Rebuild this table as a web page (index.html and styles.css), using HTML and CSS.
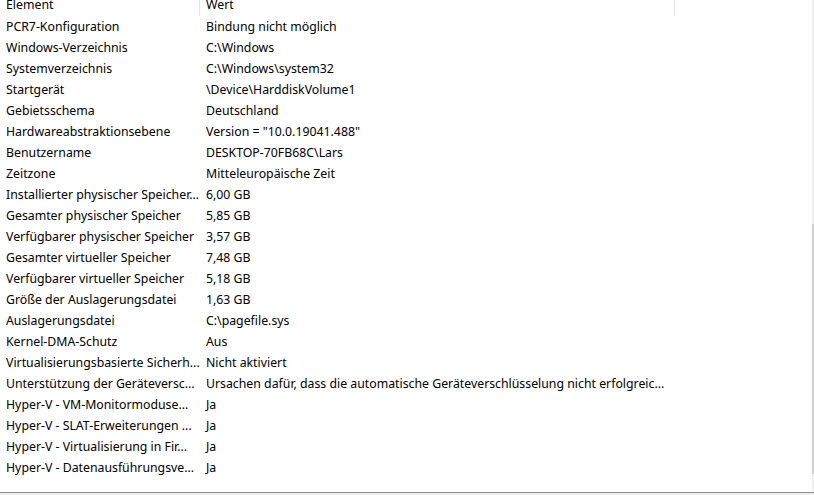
FILE: index.html
```html
<!DOCTYPE html>
<html lang="de">
<head>
<meta charset="utf-8">
<title>Systeminformationen</title>
<link rel="stylesheet" href="styles.css">
</head>
<body>
<div class="frame">
  <div class="main">
    <div class="list">
      <div class="header">
        <div class="hcell c1">Element</div>
        <div class="hcell c2">Wert</div>
        <div class="hcell c3"></div>
      </div>
      <div class="row"><div class="cell c1">PCR7-Konfiguration</div><div class="cell c2">Bindung nicht möglich</div></div>
      <div class="row"><div class="cell c1">Windows-Verzeichnis</div><div class="cell c2">C:\Windows</div></div>
      <div class="row"><div class="cell c1">Systemverzeichnis</div><div class="cell c2">C:\Windows\system32</div></div>
      <div class="row"><div class="cell c1">Startgerät</div><div class="cell c2">\Device\HarddiskVolume1</div></div>
      <div class="row"><div class="cell c1">Gebietsschema</div><div class="cell c2">Deutschland</div></div>
      <div class="row"><div class="cell c1">Hardwareabstraktionsebene</div><div class="cell c2">Version = "10.0.19041.488"</div></div>
      <div class="row"><div class="cell c1">Benutzername</div><div class="cell c2">DESKTOP-70FB68C\Lars</div></div>
      <div class="row"><div class="cell c1">Zeitzone</div><div class="cell c2">Mitteleuropäische Zeit</div></div>
      <div class="row"><div class="cell c1">Installierter physischer Speicher...</div><div class="cell c2">6,00 GB</div></div>
      <div class="row"><div class="cell c1">Gesamter physischer Speicher</div><div class="cell c2">5,85 GB</div></div>
      <div class="row"><div class="cell c1">Verfügbarer physischer Speicher</div><div class="cell c2">3,57 GB</div></div>
      <div class="row"><div class="cell c1">Gesamter virtueller Speicher</div><div class="cell c2">7,48 GB</div></div>
      <div class="row"><div class="cell c1">Verfügbarer virtueller Speicher</div><div class="cell c2">5,18 GB</div></div>
      <div class="row"><div class="cell c1">Größe der Auslagerungsdatei</div><div class="cell c2">1,63 GB</div></div>
      <div class="row"><div class="cell c1">Auslagerungsdatei</div><div class="cell c2">C:\pagefile.sys</div></div>
      <div class="row"><div class="cell c1">Kernel-DMA-Schutz</div><div class="cell c2">Aus</div></div>
      <div class="row"><div class="cell c1">Virtualisierungsbasierte Sicherh...</div><div class="cell c2">Nicht aktiviert</div></div>
      <div class="row"><div class="cell c1">Unterstützung der Geräteversc...</div><div class="cell c2">Ursachen dafür, dass die automatische Geräteverschlüsselung nicht erfolgreic...</div></div>
      <div class="row"><div class="cell c1">Hyper-V - VM-Monitormoduse...</div><div class="cell c2">Ja</div></div>
      <div class="row"><div class="cell c1">Hyper-V - SLAT-Erweiterungen ...</div><div class="cell c2">Ja</div></div>
      <div class="row"><div class="cell c1">Hyper-V - Virtualisierung in Fir...</div><div class="cell c2">Ja</div></div>
      <div class="row"><div class="cell c1">Hyper-V - Datenausführungsve...</div><div class="cell c2">Ja</div></div>
    </div>
    <div class="scrollbar">
      <div class="track-top"></div>
      <div class="thumb"></div>
      <div class="track-bottom"></div>
    </div>
  </div>
  <div class="bottom-line"></div>
  <div class="bottom-pad"></div>
</div>
</body>
</html>
```

FILE: styles.css
```css
html, body {
  margin: 0;
  padding: 0;
  background: #ffffff;
}

body {
  width: 814px;
  height: 495px;
  overflow: hidden;
  font-family: "Segoe UI", "Noto Sans", "Liberation Sans", sans-serif;
  font-size: 12.3px;
  color: #000000;
}

.frame {
  display: flex;
  flex-direction: column;
  height: 495px;
}

.main {
  display: flex;
  flex: 1;
  min-height: 0;
}

.list {
  flex: 1;
  display: flex;
  flex-direction: column;
}

.header {
  display: flex;
  height: 16px;
  overflow: hidden;
  align-items: flex-end;
}

.hcell {
  line-height: 21px;
  height: 22px;
  padding-left: 6px;
  box-sizing: border-box;
  white-space: nowrap;
  overflow: hidden;
}

.hcell.c1,
.hcell.c2 {
  border-right: 1px solid #e5e5e5;
}

.row {
  display: flex;
  height: 21px;
  line-height: 21px;
}

.c1 {
  width: 200px;
  flex: 0 0 200px;
  box-sizing: border-box;
  padding-left: 6px;
  white-space: nowrap;
  overflow: hidden;
}

.c2 {
  width: 475px;
  flex: 0 0 475px;
  box-sizing: border-box;
  padding-left: 6px;
  white-space: nowrap;
  overflow: hidden;
}

.c3 {
  flex: 1;
}

.scrollbar {
  width: 2px;
  display: flex;
  flex-direction: column;
}

.track-top {
  height: 224px;
  background: #f0f0f0;
}

.thumb {
  height: 250px;
  background: #cdcdcd;
}

.track-bottom {
  flex: 1;
  background: #f0f0f0;
}

.bottom-line {
  height: 1px;
  background: #8c8c8c;
}

.bottom-pad {
  height: 2px;
  background: #eeeeee;
}
```
